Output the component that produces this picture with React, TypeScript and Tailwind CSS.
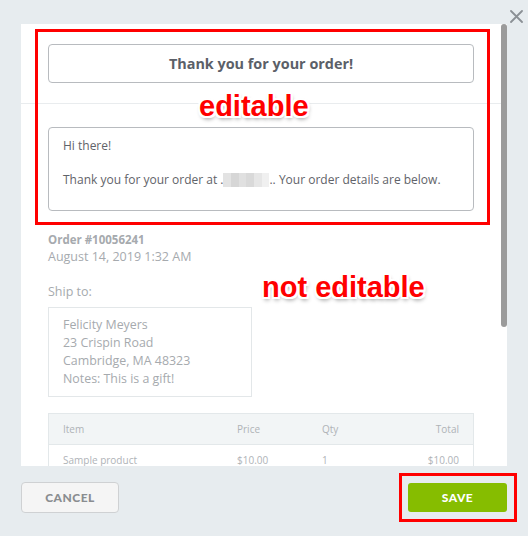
import React from 'react';

const shipLines = ['Felicity Meyers', '23 Crispin Road', 'Cambridge, MA 48323', 'Notes: This is a gift!'];

const outline =
  '[text-shadow:2px_0_0_#fff,-2px_0_0_#fff,0_2px_0_#fff,0_-2px_0_#fff,2px_2px_0_#fff,-2px_-2px_0_#fff,2px_-2px_0_#fff,-2px_2px_0_#fff,1px_3px_4px_rgba(0,0,0,0.45)]';

function Label({ text, className }: { text: string; className: string }) {
  return (
    <span
      className={`absolute font-['Liberation_Sans',Arial,sans-serif] text-[29px] leading-[29px] font-bold text-[#ff0000] whitespace-nowrap ${outline} ${className}`}
    >
      {text}
    </span>
  );
}

export default function App() {
  return (
    <div className="relative h-[536px] w-[528px] overflow-hidden bg-[#e7ecef] font-['Open_Sans',sans-serif]">
      {/* close */}
      <button className="absolute top-[10px] right-[5px] h-[13px] w-[13px]">
        <svg viewBox="0 0 13 13" className="h-[13px] w-[13px]">
          <path d="M1 1 L12 12 M12 1 L1 12" stroke="#8b9095" strokeWidth="1.8" strokeLinecap="round" />
        </svg>
      </button>

      <div className="flex flex-col pt-[24px] pl-[21px]">
        {/* panel */}
        <div className="flex h-[442px] w-[486px] bg-white">
          <div className="flex w-[480px] flex-col overflow-hidden">
            <div className="border-b border-[#e9ecee] px-[27px] pt-[20px] pb-[20px]">
              <div className="flex h-[39px] items-center justify-center rounded-[4px] border border-[#b8bbbf] text-[14.4px] font-bold text-[#5b6068]">
                Thank you for your order!
              </div>
            </div>

            <div className="px-[27px] pt-[23px]">
              <div className="h-[84px] rounded-[4px] border border-[#b8bbbf] px-[14px] pt-[9px] text-[12px] leading-[17px] text-[#5f6369]">
                <p>Hi there!</p>
                <p className="mt-[17px] flex items-center whitespace-nowrap">
                  Thank you for your order at .
                  <span className="flex h-[14px] w-[46px]">
                    <span className="flex-1 bg-[#e3e3e3]" />
                    <span className="flex-1 bg-[#d6d6d6]" />
                    <span className="flex-1 bg-[#e0e0e0]" />
                    <span className="flex-1 bg-[#d9d9d9]" />
                    <span className="flex-1 bg-[#e6e6e6]" />
                    <span className="flex-1 bg-[#f0f0f0]" />
                  </span>
                  .. Your order details are below.
                </p>
              </div>
            </div>

            <div className="px-[27px] pt-[20px] text-[#a6aaae]">
              <p className="text-[11.5px] leading-[17px] font-bold">Order #10056241</p>
              <p className="text-[12.5px] leading-[18px]">August 14, 2019 1:32 AM</p>
              <p className="mt-[17px] text-[12.5px] leading-[18px]">Ship to:</p>
              <div className="mt-[6px] w-[204px] border border-[#e3e7e9] px-[14px] pt-[8px] pb-[8px] text-[12.4px] leading-[18px]">
                {shipLines.map((l) => (
                  <p key={l}>{l}</p>
                ))}
              </div>

              <div className="mt-[16px] border border-[#e3e8ea] text-[10px] text-[#afb3b7]">
                <div className="grid h-[31px] grid-cols-[174px_85px_1fr_auto] items-center border-b border-[#e3e8ea] bg-[#f2f5f6] px-[14px]">
                  <span>Item</span>
                  <span>Price</span>
                  <span>Qty</span>
                  <span className="text-right">Total</span>
                </div>
                <div className="grid h-[31px] grid-cols-[174px_85px_1fr_auto] items-center px-[14px]">
                  <span>Sample product</span>
                  <span>$10.00</span>
                  <span>1</span>
                  <span className="text-right">$10.00</span>
                </div>
              </div>
            </div>
          </div>
          {/* scrollbar */}
          <div className="w-[6px]">
            <div className="h-[303px] rounded-full bg-[#9b9b9b]" />
          </div>
        </div>

        {/* footer */}
        <div className="mt-[16px] flex w-[486px] items-start justify-between font-['Lato',sans-serif] text-[12px] font-black tracking-[0.5px]">
          <button className="h-[31px] w-[98px] rounded-[4px] border border-[#cfd1d3] bg-[#f5f5f5] text-[#8a8d90]">
            CANCEL
          </button>
          <button className="mt-[1px] h-[29px] w-[99px] rounded-[3px] bg-[#86bd00] text-white">SAVE</button>
        </div>
      </div>

      {/* annotations */}
      <div className="absolute top-[29px] left-[35px] h-[196px] w-[455px] border-[3px] border-[#ff0000]" />
      <div className="absolute top-[473px] left-[399px] h-[49px] w-[118px] border-[3px] border-[#ff0000]" />
      <Label text="editable" className="top-[92px] left-[199px]" />
      <Label text="not editable" className="top-[273px] left-[262px]" />
    </div>
  );
}
